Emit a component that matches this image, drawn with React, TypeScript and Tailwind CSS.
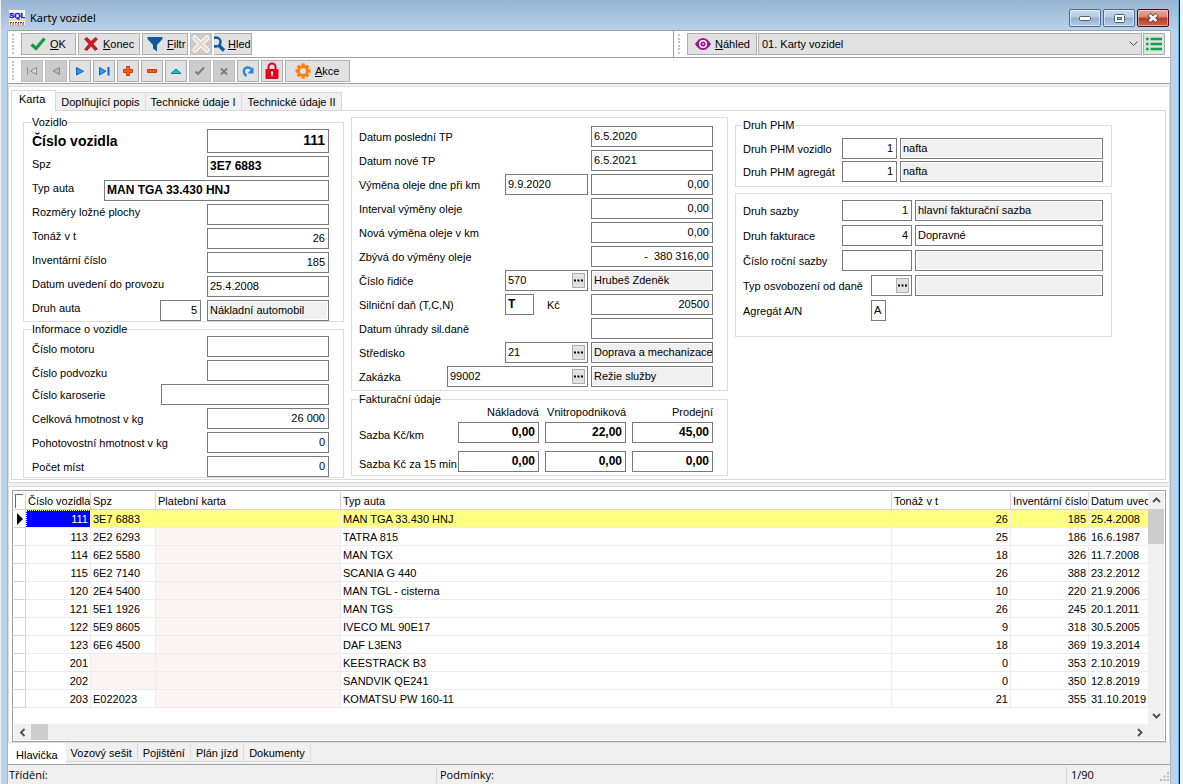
import React, { useId } from 'react';
import clsx from 'clsx';

type FieldProps = {
  id?: string;
  value?: string;
  label?: string;
  className?: string;
  right?: boolean;
  readOnly?: boolean;
};

const Field = ({ id, value = '', label, className, right, readOnly }: FieldProps) => (
  <input
    id={id}
    aria-label={label}
    defaultValue={value}
    readOnly={readOnly}
    className={clsx(
      'block min-w-0 shrink-0 border border-[#7a7a7a] pb-0.5 outline-none',
      right ? 'px-[3px] text-right' : 'pl-0.5',
      readOnly ? 'bg-[#f0f0f0] shadow-[inset_0_0_0_1px_white]' : 'bg-white',
      className
    )}
  />
);

const LookupField = ({ id, value = '', label, className }: FieldProps) => (
  <div className={clsx('flex h-[21px] shrink-0 items-center border border-[#7a7a7a] bg-white pr-0.5', className)}>
    <input id={id} aria-label={label} defaultValue={value} className="min-w-0 flex-1 pb-0.5 pl-0.5 outline-none" />
    <button
      type="button"
      aria-label="Vybrat"
      className="flex h-[15px] w-[13px] shrink-0 items-center justify-center border border-[#adadad] bg-[#e1e1e1]"
    >
      <svg width="9" height="3" viewBox="0 0 9 3">
        <path d="M0 .5h2v2H0zM3.500 .5h2v2h-2zM7 .5h2v2H7z" fill="#000" />
      </svg>
    </button>
  </div>
);

type RowProps = {
  label: string;
  align?: 'top' | 'center' | 'bottom';
  labelClass?: string;
  children: (id: string) => React.ReactNode;
};

const Row = ({ label, align = 'center', labelClass, children }: RowProps) => {
  const id = useId();
  return (
    <div
      className={clsx(
        'flex gap-[3px]',
        align === 'top' && 'items-start',
        align === 'center' && 'items-center',
        align === 'bottom' && 'items-end'
      )}
    >
      <label htmlFor={id} className={clsx('flex-1 whitespace-nowrap', labelClass ?? 'leading-4')}>
        {label}
      </label>
      {children(id)}
    </div>
  );
};

const groupClass = 'min-w-0 border border-[#dcdcdc]';
const legendClass = 'leading-[14px]';
const wide = 'h-[21px] w-[122px]';

const toolButton = 'flex h-[22px] shrink-0 items-center border border-[#adadad] bg-[#e1e1e1]';
const toolButtonOff = 'flex h-[22px] w-[22px] shrink-0 items-center justify-center border border-[#bfbfbf] bg-[#cccccc]';

const Grip = () => (
  <div className="mx-1 flex h-[22px] w-[5px] shrink-0 flex-col justify-between py-px">
    {[0, 1, 2, 3, 4, 5].map((n) => (
      <span key={n} className="h-0.5 w-0.5 bg-[#c4c4c4]" />
    ))}
  </div>
);

const AppIcon = () => (
  <svg width="16" height="16" viewBox="0 0 16 16">
    <rect width="16" height="16" fill="#fff" />
    <text x="0" y="8" fontSize="8" fontWeight="bold" fontFamily="Liberation Sans, sans-serif" fill="#0a0ad8" stroke="#0a0ad8" strokeWidth=".4">SQL</text>
    <path d="M0 10h16" stroke="#f5b060" />
    <path d="M1 12.500h2M4 12.500h1M6 12.500h2M9 12.500h1M11 12.500h2M14 12.500h1M1 14h1M3 14h2M6 14h1M8 14h2M11 14h1M13 14h2" stroke="#333" />
    <path d="M0 15.500h16" stroke="#f5b060" />
  </svg>
);

const CheckIcon = () => (
  <svg width="16" height="14" viewBox="0 0 16 14">
    <path d="M1.500 7.500 6 11.500 14.500 1.500" fill="none" stroke="#129a44" strokeWidth="3.200" />
  </svg>
);

const CrossIcon = () => (
  <svg width="16" height="16" viewBox="0 0 16 16">
    <path d="M1 3 4 1l4 4 4.500-4L15 3l-4.500 5 4.500 5-3 2-4-4.500L4 15l-3-1.500L5.500 8z" fill="#c41e24" />
  </svg>
);

const FilterIcon = () => (
  <svg width="16" height="16" viewBox="0 0 16 16">
    <path d="M.5 1h15v2L10 9v6.500L6 12.500V9L.5 3z" fill="#0d5ca0" />
  </svg>
);

const ClearIcon = () => (
  <svg width="18" height="18" viewBox="0 0 18 18">
    <path d="m3 3 12 12M15 3 3 15" stroke="#fff" strokeWidth="5" strokeLinecap="round" />
    <path d="m3 3 12 12M15 3 3 15" stroke="#ead8cc" strokeWidth="3" strokeLinecap="round" />
  </svg>
);

const SearchIcon = () => (
  <svg className="shrink-0" width="12" height="18" viewBox="0 0 12 18">
    <circle cx="2" cy="7" r="4.500" fill="none" stroke="#0d5ca0" strokeWidth="2.500" />
    <path d="m5 10.500 5 5" stroke="#0d5ca0" strokeWidth="3.500" />
  </svg>
);

const EyeIcon = () => (
  <svg width="16" height="12" viewBox="0 0 16 12">
    <path d="M0 6C2.500 2 5 0 8 0s5.500 2 8 6c-2.500 4-5 6-8 6S2.500 10 0 6z" fill="#a0188c" />
    <circle cx="8" cy="6" r="4" fill="#fff" />
    <circle cx="8" cy="6" r="2.600" fill="#a0188c" />
    <circle cx="8" cy="6" r="1" fill="#e8a0e0" />
  </svg>
);

const ListIcon = () => (
  <svg width="16" height="14" viewBox="0 0 16 14">
    <path d="M0 2h2.500M4.500 2H16M0 7h2.500M4.500 7H16M0 12h2.500M4.500 12H16" stroke="#0ba34a" strokeWidth="2.500" />
  </svg>
);

const GearIcon = () => (
  <svg width="16" height="16" viewBox="0 0 16 16">
    <g stroke="#ff7f0e" strokeWidth="3.500">
      <path d="M8 .5v15M.5 8h15M2.700 2.700l10.600 10.600M13.300 2.700 2.700 13.300" />
    </g>
    <circle cx="8" cy="8" r="5.700" fill="#ff7f0e" />
    <circle cx="8" cy="8" r="3" fill="#e1e1e1" />
  </svg>
);

const LockIcon = () => (
  <svg width="14" height="18" viewBox="0 0 14 18">
    <path d="M3.500 8V5a3.500 3.500 0 0 1 7 0v3" fill="none" stroke="#e3001b" strokeWidth="2" />
    <rect x=".5" y="7" width="13" height="10" rx="1" fill="#e3001b" />
    <path d="M7 10.500v4" stroke="#fff" strokeWidth="1.200" />
    <circle cx="7" cy="10.500" r="1.200" fill="#fff" />
  </svg>
);

const navigator = [
  { name: 'První', off: true, icon: <path d="M2.500 3.500v7M11.500 3.500v7L5.500 7z" fill="#ddd" stroke="#8a8a8a" /> },
  { name: 'Předchozí', off: true, icon: <path d="M10.500 3.500v7L4 7z" fill="#bbb" stroke="#8a8a8a" /> },
  { name: 'Další', icon: <path d="M3.500 3.500v7.500l7-3.700z" fill="#1f9cf5" stroke="#1560c8" /> },
  {
    name: 'Poslední',
    icon: (
      <>
        <path d="M2.500 3.500v7.500L9 7.200z" fill="#1f9cf5" stroke="#1560c8" />
        <path d="M11.500 3v8.500" stroke="#1560c8" strokeWidth="2" />
      </>
    )
  },
  { name: 'Přidat', icon: <path d="M5.500 2.500h3v3h3v3h-3v3h-3v-3h-3v-3h3z" fill="#ff5a1c" stroke="#c23c0c" /> },
  { name: 'Smazat', icon: <path d="M2.500 5.500h9v3h-9z" fill="#ff5a1c" stroke="#c23c0c" /> },
  { name: 'Upravit', icon: <path d="M2 9.500h10L7 5z" fill="#1fb8c8" stroke="#0b7f94" /> },
  { name: 'Uložit', off: true, icon: <path d="m2.500 7.500 2.500 2.500 6-6.500" fill="none" stroke="#7c7c7c" strokeWidth="2" /> },
  { name: 'Storno', off: true, icon: <path d="m4 4.500 6 6M10 4.500l-6 6" stroke="#7c7c7c" strokeWidth="2" /> },
  {
    name: 'Obnovit',
    icon: (
      <>
        <path d="M5.500 12C1.500 9.500 2 4 6.500 3.300c1.500 0 3 .5 4 2" fill="none" stroke="#1f86dc" strokeWidth="2.200" />
        <path d="M12.500 3v6.500H6.500z" fill="#1f86dc" />
      </>
    )
  }
];

const detailTabs = ['Doplňující popis', 'Technické údaje I', 'Technické údaje II'];
const bottomTabs = ['Vozový sešit', 'Pojištění', 'Plán jízd', 'Dokumenty'];

const vehicles = [
  { id: '111', spz: '3E7 6883', type: 'MAN TGA 33.430 HNJ', load: '26', inv: '185', date: '25.4.2008' },
  { id: '113', spz: '2E2 6293', type: 'TATRA 815', load: '25', inv: '186', date: '16.6.1987' },
  { id: '114', spz: '6E2 5580', type: 'MAN TGX', load: '18', inv: '326', date: '11.7.2008' },
  { id: '115', spz: '6E2 7140', type: 'SCANIA G 440', load: '26', inv: '388', date: '23.2.2012' },
  { id: '120', spz: '2E4 5400', type: 'MAN TGL - cisterna', load: '10', inv: '220', date: '21.9.2006' },
  { id: '121', spz: '5E1 1926', type: 'MAN TGS', load: '26', inv: '245', date: '20.1.2011' },
  { id: '122', spz: '5E9 8605', type: 'IVECO ML 90E17', load: '9', inv: '318', date: '30.5.2005' },
  { id: '123', spz: '6E6 4500', type: 'DAF L3EN3', load: '18', inv: '369', date: '19.3.2014' },
  { id: '201', spz: '', type: 'KEESTRACK B3', load: '0', inv: '353', date: '2.10.2019' },
  { id: '202', spz: '', type: 'SANDVIK QE241', load: '0', inv: '350', date: '12.8.2019' },
  { id: '203', spz: 'E022023', type: 'KOMATSU PW 160-11', load: '21', inv: '355', date: '31.10.2019' }
];

const windowButton = 'flex h-[18px] w-8 items-center justify-center rounded-[2px] border ring-1 ring-inset';
const windowButtonBlue =
  'border-[#4f6a8f] bg-[linear-gradient(#cddded_0%,#b4cae2_45%,#96b0ce_50%,#b3cde8_100%)] ring-white/50';

const TitleBar = () => (
  <header className="flex h-[30px] items-center bg-linear-to-b from-[#98b4d1] to-[#b9d1ea] pt-1.5 pr-[9px] pl-2">
    <AppIcon />
    <h1 className="flex-1 pl-[5px] font-['Noto_Sans',sans-serif] text-[11px] leading-4">Karty vozidel</h1>
    <div className="flex gap-0.5">
      <button type="button" aria-label="Minimalizovat" className={clsx(windowButton, windowButtonBlue)}>
        <svg width="12" height="5" viewBox="0 0 12 5"><rect x=".5" y=".5" width="11" height="4" rx="1" fill="#fff" stroke="#555e6e" /></svg>
      </button>
      <button type="button" aria-label="Maximalizovat" className={clsx(windowButton, windowButtonBlue)}>
        <svg width="11" height="9" viewBox="0 0 11 9"><rect x=".5" y=".5" width="10" height="8" rx="1" fill="#fff" stroke="#555e6e" /><rect x="3.500" y="3.500" width="4" height="2" fill="#9db8d6" stroke="#555e6e" /></svg>
      </button>
      <button type="button" aria-label="Zavřít" className={clsx(windowButton, 'border-[#4a1020] bg-[linear-gradient(#e8aa9e_0%,#d9826f_45%,#b93822_50%,#d0694e_100%)] ring-white/40')}>
        <svg width="12" height="10" viewBox="0 0 12 10"><path d="m2 1.500 8 7M10 1.500l-8 7" stroke="#5b4a55" strokeWidth="4.500" /><path d="m2.500 2 7 6M9.500 2l-7 6" stroke="#fff" strokeWidth="2.500" /></svg>
      </button>
    </div>
  </header>
);

const Toolbars = () => (
  <div className="border-t border-[#a0a0a0] bg-white">
    <div className="flex h-[27px] border-b border-[#a0a0a0]">
      <div className="flex flex-1 items-center border-r border-[#a0a0a0]">
        <Grip />
        <div className="flex gap-0.5">
          <button type="button" className={clsx(toolButton, 'w-[55px] gap-1 pl-2')}><CheckIcon /><span><u>O</u>K</span></button>
          <button type="button" className={clsx(toolButton, 'w-[62px] gap-1 pl-1')}><CrossIcon /><span><u>K</u>onec</span></button>
          <button type="button" className={clsx(toolButton, 'w-[46px] gap-1 pl-1')}><FilterIcon /><span><u>F</u>iltr</span></button>
          <button type="button" aria-label="Zrušit filtr" disabled className={toolButtonOff}><ClearIcon /></button>
          <button type="button" className={clsx(toolButton, 'w-[38px] gap-0.5 border-l-0')}><SearchIcon /><span><u>H</u>led</span></button>
        </div>
      </div>
      <div className="flex w-[496px] items-center">
        <Grip />
        <button type="button" className={clsx(toolButton, 'mr-px w-[70px] gap-1 pl-[7px]')}><EyeIcon /><span><u>N</u>áhled</span></button>
        <div className="relative mr-px flex-1">
          <select aria-label="Sestava" className="h-[22px] w-full appearance-none border border-[#adadad] bg-[#e1e1e1] px-[3px]">
            <option>01. Karty vozidel</option>
          </select>
          <svg className="pointer-events-none absolute top-2 right-1" width="9" height="6" viewBox="0 0 9 6"><path d="m.5.5 4 4 4-4" fill="none" stroke="#444" /></svg>
        </div>
        <button type="button" aria-label="Seznam sestav" className={clsx(toolButton, 'mr-[5px] w-[22px] justify-center')}><ListIcon /></button>
      </div>
    </div>
    <div className="flex h-[26px] items-center border-b border-[#a0a0a0]">
      <Grip />
      <div className="flex gap-0.5">
        {navigator.map((item) => (
          <button
            key={item.name}
            type="button"
            aria-label={item.name}
            disabled={item.off}
            className={item.off ? toolButtonOff : clsx(toolButton, 'w-[22px] justify-center')}
          >
            <svg width="14" height="14" viewBox="0 0 14 14">{item.icon}</svg>
          </button>
        ))}
        <button type="button" aria-label="Zamknout" className={clsx(toolButton, 'w-[22px] justify-center')}><LockIcon /></button>
        <button type="button" className={clsx(toolButton, 'w-[65px] gap-1 pl-[9px]')}><GearIcon /><span><u>A</u>kce</span></button>
      </div>
    </div>
  </div>
);

const VehicleColumn = () => (
  <div className="flex w-[321px] flex-col">
    <fieldset className={clsx(groupClass, 'pr-3.5 pl-2')}>
      <legend className={legendClass}>Vozidlo</legend>
      <div className="flex flex-col gap-[3px]">
        <Row label="Číslo vozidla" align="top" labelClass="text-[14px] leading-6 font-bold">
          {(id) => <Field id={id} value="111" right className="h-6 w-[122px] text-[14px] font-bold" />}
        </Row>
        <Row label="Spz" align="top">
          {(id) => <Field id={id} value="3E7 6883" className="h-[21px] w-[122px] text-[12px] font-bold" />}
        </Row>
        <Row label="Typ auta" align="top">
          {(id) => <Field id={id} value="MAN TGA 33.430 HNJ" className="h-[21px] w-[225px] text-[12px] font-bold" />}
        </Row>
        <Row label="Rozměry ložné plochy" align="top">{(id) => <Field id={id} className={wide} />}</Row>
        <Row label="Tonáž v t" align="top">{(id) => <Field id={id} value="26" right className={wide} />}</Row>
        <Row label="Inventární číslo" align="top">{(id) => <Field id={id} value="185" right className={wide} />}</Row>
        <Row label="Datum uvedení do provozu" align="top">{(id) => <Field id={id} value="25.4.2008" className={wide} />}</Row>
        <Row label="Druh auta" align="top">
          {(id) => (
            <div className="flex gap-1.5">
              <Field id={id} value="5" right className="h-[21px] w-[41px]" />
              <Field label="Název druhu auta" value="Nákladní automobil" readOnly className={wide} />
            </div>
          )}
        </Row>
      </div>
    </fieldset>
    <fieldset className={clsx(groupClass, 'pr-3.5 pl-2')}>
      <legend className={legendClass}>Informace o vozidle</legend>
      <div className="flex flex-col gap-[3px]">
        <Row label="Číslo motoru" align="bottom">{(id) => <Field id={id} className={wide} />}</Row>
        <Row label="Číslo podvozku" align="bottom">{(id) => <Field id={id} className={wide} />}</Row>
        <Row label="Číslo karoserie">{(id) => <Field id={id} className="h-[21px] w-[168px]" />}</Row>
        <Row label="Celková hmotnost v kg">{(id) => <Field id={id} value="26 000" right className={wide} />}</Row>
        <Row label="Pohotovostní hmotnost v kg">{(id) => <Field id={id} value="0" right className={wide} />}</Row>
        <Row label="Počet míst">{(id) => <Field id={id} value="0" right className={wide} />}</Row>
      </div>
    </fieldset>
  </div>
);

const rate = 'h-[21px] w-[81px] text-[12px] font-bold';
const rateGrid = 'grid grid-cols-[minmax(0,1fr)_81px_81px_81px] gap-x-1.5';

const ServiceColumn = () => (
  <div className="flex w-[377px] flex-col gap-px pt-0.5">
    <fieldset className={clsx(groupClass, 'flex flex-col gap-[3px] pt-2 pr-3.5 pb-[3px] pl-[7px]')}>
      <Row label="Datum poslední TP">{(id) => <Field id={id} value="6.5.2020" className={wide} />}</Row>
      <Row label="Datum nové TP">{(id) => <Field id={id} value="6.5.2021" className={wide} />}</Row>
      <Row label="Výměna oleje dne při km">
        {(id) => (
          <>
            <Field id={id} value="9.9.2020" className="h-[21px] w-[83px]" />
            <Field label="Výměna oleje při km" value="0,00" right className={wide} />
          </>
        )}
      </Row>
      <Row label="Interval výměny oleje">{(id) => <Field id={id} value="0,00" right className={wide} />}</Row>
      <Row label="Nová výměna oleje v km">{(id) => <Field id={id} value="0,00" right className={wide} />}</Row>
      <Row label="Zbývá do výměny oleje">{(id) => <Field id={id} value="-  380 316,00" right className={wide} />}</Row>
      <Row label="Číslo řidiče">
        {(id) => (
          <>
            <LookupField id={id} value="570" className="w-[83px]" />
            <Field label="Jméno řidiče" value="Hrubeš Zdeněk" readOnly className={wide} />
          </>
        )}
      </Row>
      <Row label="Silniční daň (T,C,N)">
        {(id) => (
          <>
            <Field id={id} value="T" className="h-[21px] w-[29px] text-[12px] font-bold" />
            <span className="w-[51px] pl-2.5">Kč</span>
            <Field label="Silniční daň v Kč" value="20500" right className={wide} />
          </>
        )}
      </Row>
      <Row label="Datum úhrady sil.daně">{(id) => <Field id={id} className={wide} />}</Row>
      <Row label="Středisko">
        {(id) => (
          <>
            <LookupField id={id} value="21" className="w-[83px]" />
            <Field label="Název střediska" value="Doprava a mechanizace" readOnly className={wide} />
          </>
        )}
      </Row>
      <Row label="Zakázka">
        {(id) => (
          <>
            <LookupField id={id} value="99002" className="w-[141px]" />
            <Field label="Název zakázky" value="Režie služby" readOnly className={wide} />
          </>
        )}
      </Row>
    </fieldset>
    <fieldset className={clsx(groupClass, 'pr-3.5 pb-[3px] pl-[7px]')}>
      <legend className={legendClass}>Fakturační údaje</legend>
      <div className={clsx(rateGrid, 'text-right leading-3 whitespace-nowrap')}>
        <span />
        <span>Nákladová</span>
        <span>Vnitropodniková</span>
        <span>Prodejní</span>
      </div>
      <div className={clsx(rateGrid, 'mt-1 items-end gap-y-2')}>
        <span className="leading-4 whitespace-nowrap">Sazba Kč/km</span>
        <Field label="Sazba Kč/km nákladová" value="0,00" right className={rate} />
        <Field label="Sazba Kč/km vnitropodniková" value="22,00" right className={rate} />
        <Field label="Sazba Kč/km prodejní" value="45,00" right className={rate} />
        <span className="leading-4 whitespace-nowrap">Sazba Kč za 15 min</span>
        <Field label="Sazba za 15 min nákladová" value="0,00" right className={rate} />
        <Field label="Sazba za 15 min vnitropodniková" value="0,00" right className={rate} />
        <Field label="Sazba za 15 min prodejní" value="0,00" right className={rate} />
      </div>
    </fieldset>
  </div>
);

const FuelColumn = () => (
  <div className="flex w-[377px] flex-col gap-1.5 pt-[3px]">
    <fieldset className={clsx(groupClass, 'pr-2 pb-1 pl-[7px]')}>
      <legend className={legendClass}>Druh PHM</legend>
      <div className="mt-1.5 flex flex-col gap-0.5">
        <Row label="Druh PHM vozidlo">
          {(id) => (
            <>
              <Field id={id} value="1" right className="h-[21px] w-[55px]" />
              <Field label="Název PHM vozidla" value="nafta" readOnly className="h-[21px] w-[203px]" />
            </>
          )}
        </Row>
        <Row label="Druh PHM agregát">
          {(id) => (
            <>
              <Field id={id} value="1" right className="h-[21px] w-[55px]" />
              <Field label="Název PHM agregátu" value="nafta" readOnly className="h-[21px] w-[203px]" />
            </>
          )}
        </Row>
      </div>
    </fieldset>
    <fieldset className={clsx(groupClass, 'flex flex-col gap-1 pt-1.5 pr-2 pb-[15px] pl-[7px]')}>
      <Row label="Druh sazby">
        {(id) => (
          <>
            <Field id={id} value="1" right className="h-[21px] w-[70px]" />
            <Field label="Název sazby" value="hlavní fakturační sazba" readOnly className="h-[21px] w-[188px]" />
          </>
        )}
      </Row>
      <Row label="Druh fakturace">
        {(id) => (
          <>
            <Field id={id} value="4" right className="h-[21px] w-[70px]" />
            <Field label="Název fakturace" value="Dopravné" className="h-[21px] w-[188px]" />
          </>
        )}
      </Row>
      <Row label="Číslo roční sazby">
        {(id) => (
          <>
            <Field id={id} className="h-[21px] w-[70px]" />
            <Field label="Název roční sazby" readOnly className="h-[21px] w-[188px]" />
          </>
        )}
      </Row>
      <Row label="Typ osvobození od daně">
        {(id) => (
          <>
            <LookupField id={id} className="w-[41px]" />
            <Field label="Název osvobození" readOnly className="h-[21px] w-[188px]" />
          </>
        )}
      </Row>
      <Row label="Agregát A/N">
        {(id) => (
          <div className="w-[232px]">
            <Field id={id} value="A" className="h-[21px] w-[15px]" />
          </div>
        )}
      </Row>
    </fieldset>
  </div>
);

const cell = 'overflow-hidden border-r border-b border-[#ececec] px-0.5 whitespace-nowrap';
const headCell = 'overflow-hidden border-r border-b border-[#d4d4d4] px-0.5 text-left font-normal whitespace-nowrap';

const VehicleTable = () => (
  <table className="w-full table-fixed border-separate border-spacing-0 leading-4">
    <colgroup>
      <col className="w-3" />
      <col className="w-[65px]" />
      <col className="w-[65px]" />
      <col className="w-[185px]" />
      <col />
      <col className="w-[119px]" />
      <col className="w-[78px]" />
      <col className="w-[59px]" />
    </colgroup>
    <thead>
      <tr className="h-[18px]">
        <th className="border-r border-b border-[#d4d4d4] pl-px" aria-label="Výběr">
          <div className="h-3.5 w-2 border-t border-l border-[#696969]" />
        </th>
        <th className={headCell}>Číslo vozidla</th>
        <th className={headCell}>Spz</th>
        <th className={headCell}>Platební karta</th>
        <th className={headCell}>Typ auta</th>
        <th className={headCell}>Tonáž v t</th>
        <th className={headCell}>Inventární číslo</th>
        <th className="overflow-hidden border-b border-[#d4d4d4] pl-0.5 text-left font-normal whitespace-nowrap">Datum uvec</th>
      </tr>
    </thead>
    <tbody>
      {vehicles.map((vehicle, index) => {
        const active = index === 0;
        return (
          <tr key={vehicle.id} className={clsx('h-[18px]', active && 'bg-[#ffff80]')}>
            <td className="border-r border-b border-[#d4d4d4] bg-white">
              {active && (
                <svg className="ml-[3px] block" width="7" height="12" viewBox="0 0 7 12">
                  <path d="M0 0v12l6-6z" fill="#000" />
                </svg>
              )}
            </td>
            <td className={clsx(cell, 'text-right', active && 'bg-[#0000ff] text-white outline-1 -outline-offset-1 outline-dotted outline-[#ffff80]')}>
              {vehicle.id}
            </td>
            <td className={clsx(cell, !vehicle.spz && 'bg-[#fcf5f3]')}>{vehicle.spz}</td>
            <td className={clsx(cell, !active && 'bg-[#fcf5f3]')} />
            <td className={cell}>{vehicle.type}</td>
            <td className={clsx(cell, 'text-right')}>{vehicle.load}</td>
            <td className={clsx(cell, 'text-right')}>{vehicle.inv}</td>
            <td className="overflow-hidden border-b border-[#ececec] pl-0.5 whitespace-nowrap">{vehicle.date}</td>
          </tr>
        );
      })}
    </tbody>
  </table>
);

const Arrow = ({ d }: { d: string }) => (
  <svg className="shrink-0" width="9" height="9" viewBox="0 0 9 9">
    <path d={d} fill="none" stroke="#555" strokeWidth="2" />
  </svg>
);

export default function App() {
  return (
    <div className="flex min-h-screen bg-[#f0f0f0] pl-px font-['Liberation_Sans',Arial,sans-serif] text-[11px] leading-4 text-black">
      <div className="flex min-w-0 flex-1 flex-col border-r border-black">
        <div className="flex flex-1 flex-col border-r border-[#35c0f0]">
          <TitleBar />
          <div className="flex flex-1 bg-[#bbd2ea] pr-[7px] pl-1.5">
            <main className="flex min-w-0 flex-1 flex-col border-x border-[#a8b4c0] bg-[#f0f0f0]">
              <Toolbars />

              <section className="mt-0.5 border border-[#dcdcdc] bg-white pt-[3px] pr-[3px] pb-0.5 pl-0.5">
                <div className="flex items-end" role="tablist">
                  <button type="button" role="tab" aria-selected="true" className="-mb-px h-[21px] border border-b-0 border-[#d9d9d9] bg-white pr-2.5 pb-1 pl-[7px]">Karta</button>
                  {detailTabs.map((tab) => (
                    <button key={tab} type="button" role="tab" aria-selected="false" className="h-[18px] border border-b-0 border-l-0 border-[#d9d9d9] bg-[#f0f0f0] px-[5px] whitespace-nowrap last:pl-1.5">
                      {tab}
                    </button>
                  ))}
                </div>
                <div className="flex gap-[7px] border border-[#d9d9d9] px-[11px] pt-1 pb-px">
                  <VehicleColumn />
                  <ServiceColumn />
                  <FuelColumn />
                </div>
              </section>

              <section className="mt-[3px] flex flex-1 flex-col border border-[#dcdcdc] bg-white px-[3px] pt-[3px]">
                <div className="flex flex-1 flex-col border border-[#a0a0a0] p-px">
                  <div className="flex flex-1">
                    <div className="min-w-0 flex-1">
                      <VehicleTable />
                    </div>
                    <div className="flex w-4 flex-col items-center bg-[#f0f0f0] py-1">
                      <Arrow d="m1 6 3.500-3.500L8 6" />
                      <div className="mt-1 h-[35px] w-full bg-[#cdcdcd]" />
                      <div className="flex-1" />
                      <Arrow d="m1 3 3.500 3.500L8 3" />
                    </div>
                  </div>
                  <div className="flex h-4 items-center gap-1 bg-[#f0f0f0] pr-5 pl-1">
                    <Arrow d="M6.500 1 3 4.500 6.500 8" />
                    <div className="h-4 w-[17px] bg-[#cdcdcd]" />
                    <div className="flex-1" />
                    <Arrow d="M3 1l3.500 3.500L3 8" />
                  </div>
                </div>
              </section>

              <nav className="flex h-[22px] items-start border-b border-[#a0a0a0]">
                <button type="button" className="h-[21px] bg-white px-2 pt-0.5">Hlavička</button>
                {bottomTabs.map((tab) => (
                  <button key={tab} type="button" className="mt-px h-[18px] border-r border-b border-[#d9d9d9] px-[5px] whitespace-nowrap">
                    {tab}
                  </button>
                ))}
              </nav>

              <footer className="flex h-[19px] items-center font-['Open_Sans',sans-serif]">
                <span className="flex-1 pl-px">Třídění:</span>
                <span className="w-[630px] border-l border-[#d4d4d4] pl-[3px]">Podmínky:</span>
                <span className="w-[94px] border-l border-[#d4d4d4] pl-1">1/90</span>
                <svg className="mb-0.5 shrink-0 self-end" width="10" height="10" viewBox="0 0 10 10">
                  <path d="M7 0h2v2H7zM3.500 3.500h2v2h-2zM7 3.500h2v2H7zM0 7h2v2H0zM3.500 7h2v2h-2zM7 7h2v2H7z" fill="#bbb" />
                </svg>
              </footer>
            </main>
          </div>
        </div>
      </div>
      <div className="w-[3px] shrink-0" />
    </div>
  );
}
